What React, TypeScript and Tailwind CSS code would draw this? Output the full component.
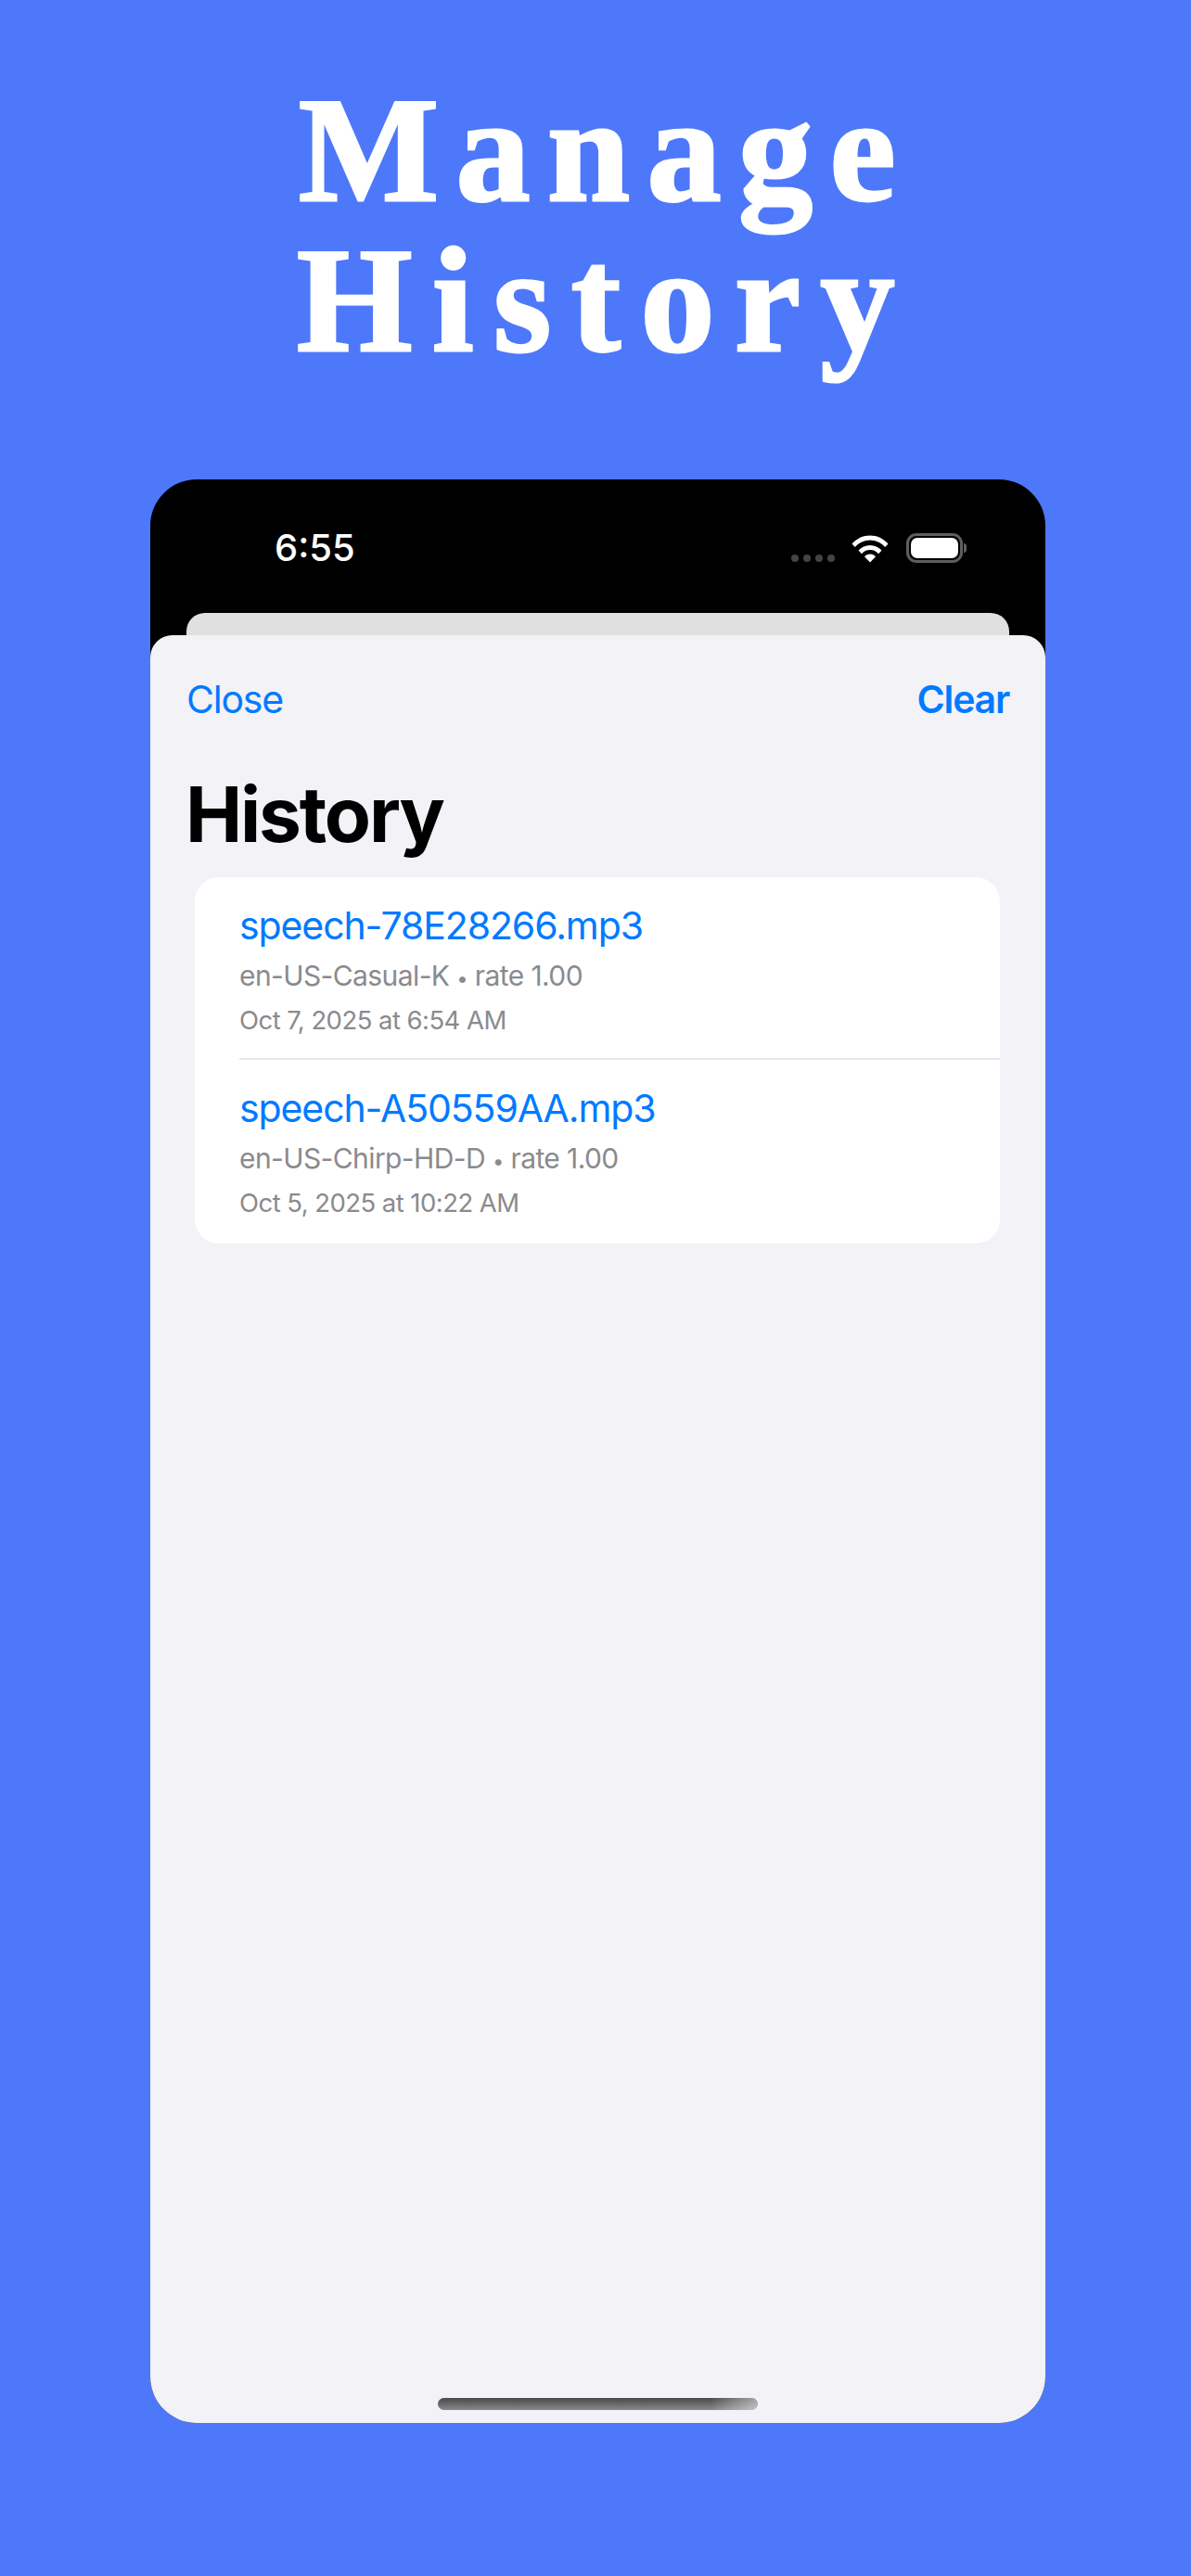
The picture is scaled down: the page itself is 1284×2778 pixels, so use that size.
export default function App() {
  const items = [
    { name: "speech-78E28266.mp3", voice: "en-US-Casual-K", date: "Oct 7, 2025 at 6:54 AM" },
    { name: "speech-A50559AA.mp3", voice: "en-US-Chirp-HD-D", date: "Oct 5, 2025 at 10:22 AM" },
  ];
  return (
    <div className="w-[1284px] h-[2778px] bg-[#4e78fa] flex flex-col overflow-hidden font-['Inter',sans-serif]">
      <h1 className="pt-[81px] h-[517px] pl-[22px] text-center text-white font-bold text-[160px] leading-[162px] font-['Liberation_Serif',serif] [-webkit-text-stroke:3px_white]">
        <div className="tracking-[18.5px]">Manage</div>
        <div className="tracking-[21.5px]">History</div>
      </h1>
      <div className="ml-[162px] w-[965px] h-[2096px] rounded-[50px] overflow-hidden bg-black flex flex-col">
        <div className="h-[168px] shrink-0 flex flex-col justify-between">
          <div className="flex items-center justify-between pl-[134px] pr-[85px] pt-[50px] text-white">
            <span className="text-[40px] leading-[48px] font-medium">6:55</span>
            <div className="flex items-end gap-[18px]">
              <div className="flex gap-[5px] mb-[1px]">
                <span className="w-[8px] h-[8px] rounded-full bg-[#444444]" />
                <span className="w-[8px] h-[8px] rounded-full bg-[#444444]" />
                <span className="w-[8px] h-[8px] rounded-full bg-[#444444]" />
                <span className="w-[8px] h-[8px] rounded-full bg-[#444444]" />
              </div>
              <svg width="40" height="30" viewBox="0 0 40 30" className="mr-[1px]">
                <path d="M0.5 9.5C5.5 3.8 12.4 0.5 20 0.5s14.5 3.3 19.5 9l-3.4 3.6C32 8.4 26.3 5.6 20 5.6S8 8.4 3.900 13.100Z" fill="white" />
                <path d="M7.5 16.6C10.7 13.100 15.100 11 20 11s9.300 2.100 12.500 5.600l-3.400 3.600C26.800 17.600 23.600 16 20 16s-6.800 1.600-9.100 4.200Z" fill="white" />
                <path d="M14 23.200c1.500-1.600 3.600-2.600 6-2.600s4.500 1 6 2.600L20 29.500Z" fill="white" />
              </svg>
              <div className="flex items-center">
                <div className="w-[61px] h-[32px] rounded-[11px] border-[3px] border-[#5e5e5e] p-[2px]">
                  <div className="w-full h-full rounded-[7px] bg-white" />
                </div>
                <div className="w-[3px] h-[10px] rounded-r-full bg-[#5e5e5e] ml-[1px]" />
              </div>
            </div>
          </div>
          <div className="mx-[39px] h-[24px] rounded-t-[20px] bg-[#e0e0e0]" />
        </div>
        <div className="flex-1 bg-[#f2f2f7] rounded-t-[24px] relative">
          <div className="flex justify-between pl-[39px] pr-[39px] pt-[44px] text-[#007aff] text-[41px] leading-[50px] tracking-[-1.2px]">
            <span>Close</span>
            <span className="font-semibold">Clear</span>
          </div>
          <div className="px-[38px] pt-[50px] text-black font-bold text-[82px] leading-[100px] tracking-[-2.2px]">History</div>
          <div className="mt-[17px] ml-[48px] w-[868px] h-[395px] rounded-[26px] bg-white">
            {items.map((it, i) => (
              <div key={it.name} className={"ml-[48px] h-[197px] pt-[27px] " + (i === 0 ? "border-b-2 border-[#e5e5ea]" : "")}>
                <div className="text-[#007aff] text-[41px] leading-[50px] tracking-[-1.1px]">{it.name}</div>
                <div className="text-[#8a8a8e] text-[30px] leading-[38px] mt-[10px] tracking-[-0.6px]">
                  {it.voice} <span className="text-[22px]">•</span> rate 1.00
                </div>
                <div className="text-[#8a8a8e] text-[27.5px] leading-[36px] mt-[8px] tracking-[-0.55px]">{it.date}</div>
              </div>
            ))}
          </div>
          <div className="absolute left-[310px] bottom-[14px] w-[345px] h-[13px] rounded-full bg-gradient-to-b from-[#494949] to-[#8a8a8a] overflow-hidden">
            <div className="w-full h-full bg-gradient-to-r from-transparent from-85% to-white/50" />
          </div>
        </div>
      </div>
    </div>
  );
}
